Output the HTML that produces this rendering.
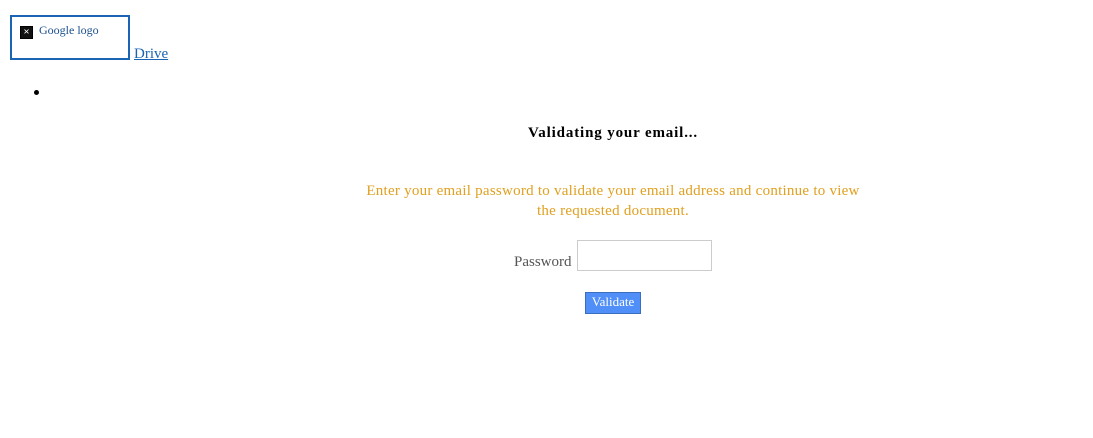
<!DOCTYPE html>
<html><head><style>
body{margin:0;background:#fff;font-family:"Liberation Serif","Noto Serif CJK SC",serif;position:relative;width:1093px;height:438px;overflow:hidden}
.abs{position:absolute}
.logo{left:10px;top:15px;width:116px;height:41px;border:2px solid #1a64b4}
.logo .ic{position:absolute;left:8px;top:9px;width:11px;height:11px;border:1px solid #000;background:#111;color:#fff;font-size:11px;line-height:11px;text-align:center;font-weight:bold}
.logo .t{position:absolute;left:27px;top:6px;font-size:12px;color:#1a4f8c}
a{color:#1a64b4;text-decoration:underline}
</style></head><body>
<div class="abs logo"><div class="ic">×</div><div class="t">Google logo</div></div>
<a class="abs" style="left:134px;top:46px;font-size:15px">Drive</a>
<div class="abs" style="left:34px;top:90px;width:5px;height:5px;border-radius:50%;background:#000"></div>
<div class="abs" style="left:0;width:1226px;top:125px;text-align:center;font-weight:bold;font-size:15px;letter-spacing:0.85px">Validating your email...</div>
<div class="abs" style="left:340px;width:546px;top:181px;text-align:center;color:#e0a020;font-size:15px;line-height:20px;letter-spacing:0.25px">Enter your email password to validate your email address and continue to view<br>the requested document.</div>
<div class="abs" style="left:514px;top:254px;font-size:15px;color:#555">Password</div>
<div class="abs" style="left:577px;top:240px;width:133px;height:29px;border:1px solid #ccc"></div>
<div class="abs" style="left:585px;top:292px;width:54px;height:20px;background:#4f8ff7;border:1px solid #3a6fc0;color:#fff;font-size:13px;text-align:center;line-height:17px">Validate</div>
</body></html>
